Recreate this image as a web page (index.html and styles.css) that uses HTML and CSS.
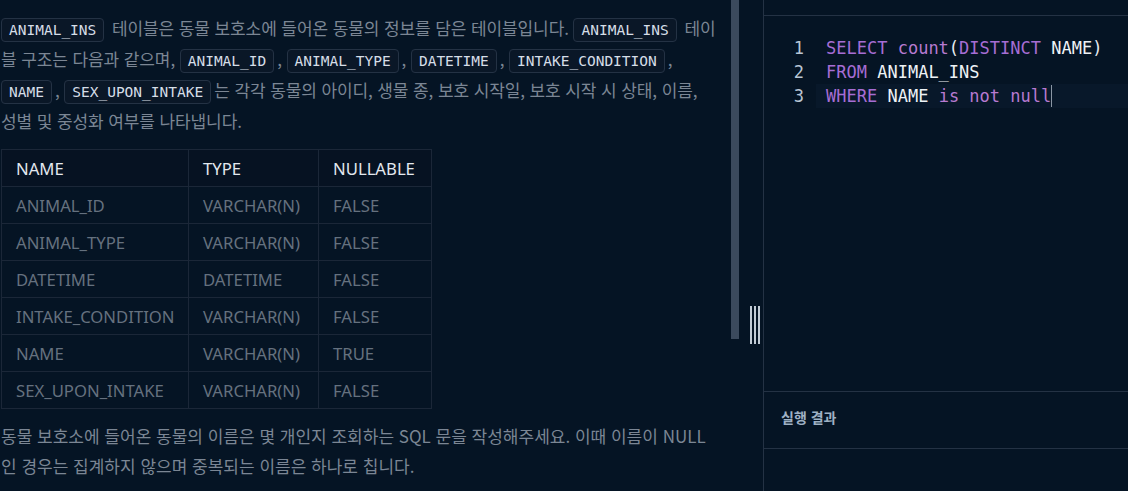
FILE: index.html
```html
<!DOCTYPE html>
<html lang="ko">
<head>
<meta charset="utf-8">
<link rel="stylesheet" href="styles.css">
</head>
<body>
<div class="layout">
  <div class="left">
    <div class="content">
      <p class="desc"><code>ANIMAL_INS</code> 테이블은 동물 보호소에 들어온 동물의 정보를 담은 테이블입니다. <code>ANIMAL_INS</code> 테이블 구조는 다음과 같으며, <code>ANIMAL_ID</code>, <code>ANIMAL_TYPE</code>, <code>DATETIME</code>, <code>INTAKE_CONDITION</code>, <code>NAME</code>, <code>SEX_UPON_INTAKE</code>는 각각 동물의 아이디, 생물 종, 보호 시작일, 보호 시작 시 상태, 이름, 성별 및 중성화 여부를 나타냅니다.</p>
      <table class="schema">
        <thead>
          <tr><th class="c1">NAME</th><th class="c2">TYPE</th><th class="c3">NULLABLE</th></tr>
        </thead>
        <tbody>
          <tr><td>ANIMAL_ID</td><td>VARCHAR(N)</td><td>FALSE</td></tr>
          <tr><td>ANIMAL_TYPE</td><td>VARCHAR(N)</td><td>FALSE</td></tr>
          <tr><td>DATETIME</td><td>DATETIME</td><td>FALSE</td></tr>
          <tr><td>INTAKE_CONDITION</td><td>VARCHAR(N)</td><td>FALSE</td></tr>
          <tr><td>NAME</td><td>VARCHAR(N)</td><td>TRUE</td></tr>
          <tr><td>SEX_UPON_INTAKE</td><td>VARCHAR(N)</td><td>FALSE</td></tr>
        </tbody>
      </table>
      <p class="desc question">동물 보호소에 들어온 동물의 이름은 몇 개인지 조회하는 SQL 문을 작성해주세요. 이때 이름이 NULL인 경우는 집계하지 않으며 중복되는 이름은 하나로 칩니다.</p>
    </div>
  </div>
  <div class="track"><div class="thumb"></div></div>
  <div class="gutter"><div class="handle"><span></span><span></span><span></span></div></div>
  <div class="right">
    <div class="topbar"></div>
    <div class="editor">
      <div class="line"><span class="ln">1</span><span class="code"><span class="kw">SELECT</span> <span class="fn">count</span>(<span class="kw">DISTINCT</span> <span class="id">NAME</span>)</span></div>
      <div class="line"><span class="ln">2</span><span class="code"><span class="kw">FROM</span> <span class="id">ANIMAL_INS</span></span></div>
      <div class="line active"><span class="ln">3</span><span class="code"><span class="kw">WHERE</span> <span class="id">NAME</span> <span class="fn">is not null</span><span class="cursor"></span></span></div>
    </div>
    <div class="result-head">실행 결과</div>
    <div class="result-body"></div>
  </div>
</div>
</body>
</html>
```
FILE: styles.css
```css
html, body {
  margin: 0;
  padding: 0;
  background: #051424;
  height: 491px;
  overflow: hidden;
}
.layout {
  display: flex;
  height: 491px;
  font-family: "Noto Sans", "Noto Sans CJK KR", sans-serif;
}
.left {
  width: 731px;
  flex: none;
  overflow: hidden;
}
.content {
  width: 716px;
  padding: 12px 0 0 1px;
}
.desc {
  margin: 0;
  color: #7b8694;
  font-size: 17px;
  line-height: 31px;
  font-family: "Noto Sans CJK KR", "Noto Sans", sans-serif;
  letter-spacing: -0.1px;
}
.desc code {
  font-family: "DejaVu Sans Mono", monospace;
  font-size: 14.5px;
  line-height: 1;
  letter-spacing: 0;
  color: #d6dee8;
  background: #0a1727;
  border: 1px solid #243244;
  border-radius: 4px;
  padding: 3px 7px;
  margin-right: 3px;
}
.schema {
  margin-top: 13px;
  border-collapse: collapse;
  table-layout: fixed;
  width: 431px;
  font-size: 16.7px;
  font-family: "Noto Sans", "Noto Sans CJK KR", sans-serif;
}
.schema th, .schema td {
  border: 1px solid #1b2738;
  height: 36px;
  padding: 0 0 0 14px;
  text-align: left;
  font-weight: 400;
  white-space: nowrap;
}
.schema th {
  color: #e2e8ef;
  background: #061222;
}
.schema td {
  color: #65717f;
}
.c1 { width: 172px; }
.c2 { width: 115px; }
.c3 { width: 98px; }
.question {
  margin-top: 12px;
  line-height: 30px;
  letter-spacing: 0;
}
.track {
  width: 8px;
  flex: none;
}
.thumb {
  height: 339px;
  background: #3b4a5d;
}
.gutter {
  width: 24px;
  flex: none;
  display: flex;
  align-items: flex-start;
  padding-top: 306px;
  box-sizing: border-box;
  padding-left: 11px;
}
.handle {
  display: flex;
  gap: 2px;
  height: 38px;
}
.handle span {
  width: 2px;
  background: #c3ccd6;
}
.right {
  flex: 1;
  border-left: 1px solid #243244;
  display: flex;
  flex-direction: column;
}
.topbar {
  height: 15px;
  border-bottom: 1px solid #243244;
  flex: none;
}
.editor {
  height: 376px;
  padding-top: 20px;
  box-sizing: border-box;
  border-bottom: 1px solid #243244;
  font-family: "DejaVu Sans Mono", monospace;
  font-size: 17px;
  flex: none;
}
.line {
  display: flex;
  height: 24px;
  line-height: 24px;
}
.ln {
  width: 40px;
  text-align: right;
  color: #b9c6d4;
  padding-right: 22px;
  flex: none;
}
.code {
  display: block;
  color: #e6ebf0;
  white-space: pre;
}
.active .code {
  flex: 1;
  background: #08182a;
  margin-left: -10px;
  padding-left: 10px;
}
.kw { color: #a66dd4; }
.fn { color: #b77ad0; }
.id { color: #eef2f6; }
.cursor {
  display: inline-block;
  width: 1px;
  height: 22px;
  vertical-align: -5px;
  background: #8a96a4;
}
.result-head {
  height: 57px;
  border-bottom: 1px solid #243244;
  display: flex;
  align-items: center;
  padding: 0 0 6px 17px;
  box-sizing: border-box;
  font-size: 14px;
  font-weight: 700;
  color: #9fb1c4;
  font-family: "Noto Sans CJK KR", "Noto Sans", sans-serif;
  flex: none;
}
.result-body {
  flex: 1;
}
```
